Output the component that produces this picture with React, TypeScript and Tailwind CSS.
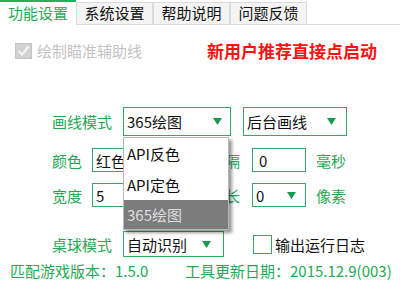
import React from "react";

const GREEN = "#1fa955";

function Caret() {
  return (
    <svg width="9" height="7" viewBox="0 0 9 7" className="shrink-0">
      <path d="M0 0 H9 L4.5 7 Z" fill="#1a9a4c" />
    </svg>
  );
}

function Select({ text, w, h, caretAt }: { text: string; w: string; h: string; caretAt?: string }) {
  return (
    <div className={`flex items-center border border-[#2fae62] bg-white pl-[3px] pr-[8px] text-[#111] ${w} ${h}`}>
      <span className="leading-none">{text}</span>
      <span className={`ml-auto ${caretAt ?? ""}`}>
        <Caret />
      </span>
    </div>
  );
}

const TABS = ["功能设置", "系统设置", "帮助说明", "问题反馈"];

export default function App() {
  return (
    <div className="relative h-[281px] w-[400px] overflow-hidden bg-white font-['Noto_Sans_CJK_SC','Microsoft_YaHei',sans-serif] text-[15px]">
      {/* tabs */}
      <div className="flex h-[25px] border-b border-[#dadada]">
        {TABS.map((t, i) =>
          i === 0 ? (
            <div
              key={t}
              className="-mb-px flex w-[76px] items-center justify-center border-t-2 border-[#22b35a] bg-white pb-[2px] leading-none text-[#1fa955]"
            >
              {t}
            </div>
          ) : (
            <div
              key={t}
              className="mt-[2px] flex w-[77px] items-center justify-center border-l border-r border-t border-[#dadada] bg-[#f4f4f4] pb-[2px] leading-none text-[#111]"
            >
              {t}
            </div>
          )
        )}
      </div>

      {/* disabled checkbox + notice */}
      <div className="mt-[17px] flex h-[17px] items-center pl-[15px]">
        <svg width="17" height="16" viewBox="0 0 17 16">
          <rect x="0.5" y="0.5" width="16" height="15" fill="#d2d2d2" stroke="#c4c4c4" />
          <path d="M3.5 8 L7 11.5 L13.5 3.5" stroke="#f2f2f2" strokeWidth="2.4" fill="none" />
        </svg>
        <span className="ml-[5px] leading-none text-[#c3c3c3]">绘制瞄准辅助线</span>
        <span className="ml-auto mr-[23px] text-[17px] font-bold leading-none text-[#ff1010]">
          新用户推荐直接点启动
        </span>
      </div>

      {/* 画线模式 */}
      <div className="mt-[48px] flex items-center pl-[52px]">
        <span className="w-[71px] leading-none" style={{ color: GREEN }}>画线模式</span>
        <Select text="365绘图" w="w-[108px]" h="h-[29px]" />
        <div className="ml-[12px]">
          <Select text="后台画线" w="w-[104px]" h="h-[29px]" caretAt="mr-[2px]" />
        </div>
      </div>

      {/* 颜色 */}
      <div className="mt-[12px] flex items-center pl-[52px]">
        <span className="w-[40px] leading-none" style={{ color: GREEN }}>颜色</span>
        <div className="flex h-[24px] w-[106px] items-center border border-[#2fae62] pl-[3px] leading-none text-[#111]">
          红色
        </div>
        <span className="w-[42px] text-right leading-none" style={{ color: GREEN }}>间隔</span>
        <div className="ml-[12px] flex h-[24px] w-[54px] items-center border border-[#2fae62] pl-[6px] leading-none text-[#111]">
          0
        </div>
        <span className="ml-[10px] leading-none" style={{ color: GREEN }}>毫秒</span>
      </div>

      {/* 宽度 */}
      <div className="mt-[11px] flex items-center pl-[52px]">
        <span className="w-[40px] leading-none" style={{ color: GREEN }}>宽度</span>
        <div className="flex h-[24px] w-[106px] items-center border border-[#2fae62] pl-[3px] leading-none text-[#111]">
          5
        </div>
        <span className="w-[42px] text-right leading-none" style={{ color: GREEN }}>线长</span>
        <div className="ml-[12px]">
          <Select text="0" w="w-[54px]" h="h-[24px]" caretAt="mr-[1px]" />
        </div>
        <span className="ml-[10px] leading-none" style={{ color: GREEN }}>像素</span>
      </div>

      {/* 桌球模式 */}
      <div className="mt-[24px] flex items-center pl-[52px]">
        <span className="w-[71px] leading-none" style={{ color: GREEN }}>桌球模式</span>
        <Select text="自动识别" w="w-[101px]" h="h-[26px]" caretAt="mr-[4px]" />
        <div className="ml-[29px] h-[19px] w-[19px] border border-[#2fae62] bg-white" />
        <span className="ml-[3px] leading-none text-[#111]">输出运行日志</span>
      </div>

      {/* footer */}
      <div className="mt-[6px] flex items-center pl-[10px] leading-none" style={{ color: GREEN }}>
        <span className="w-[175px]">匹配游戏版本：1.5.0</span>
        <span>工具更新日期：2015.12.9(003)</span>
      </div>

      {/* open dropdown list */}
      <div className="absolute left-[123px] top-[137px] w-[106px] border border-[#b8b8b8] bg-white shadow-[3px_3px_3px_rgba(0,0,0,0.4)]">
        <div className="flex h-[31px] items-center pl-[3px] leading-none text-[#111]">API反色</div>
        <div className="flex h-[31px] items-center pl-[3px] leading-none text-[#111]">API定色</div>
        <div className="flex h-[29px] items-center bg-[#7c7c7c] pl-[3px] leading-none text-[#dcdcdc]">365绘图</div>
      </div>
    </div>
  );
}
